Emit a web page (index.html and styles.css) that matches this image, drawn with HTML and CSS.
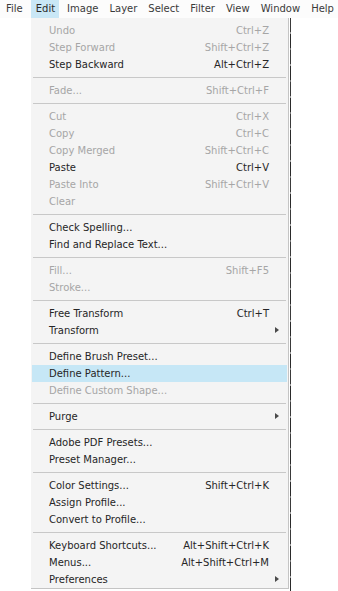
FILE: index.html
```html
<!DOCTYPE html>
<html>
<head>
<meta charset="utf-8">
<link rel="stylesheet" href="styles.css">
</head>
<body>
<div class="menubar">
  <span class="mb-item">File</span>
  <span class="mb-item active">Edit</span>
  <span class="mb-item">Image</span>
  <span class="mb-item">Layer</span>
  <span class="mb-item">Select</span>
  <span class="mb-item">Filter</span>
  <span class="mb-item">View</span>
  <span class="mb-item">Window</span>
  <span class="mb-item">Help</span>
</div>
<div class="stage">
  <div class="menu">
    <div class="row dis"><span class="lbl">Undo</span><span class="key">Ctrl+Z</span></div>
    <div class="row dis"><span class="lbl">Step Forward</span><span class="key">Shift+Ctrl+Z</span></div>
    <div class="row"><span class="lbl">Step Backward</span><span class="key">Alt+Ctrl+Z</span></div>
    <div class="sep"></div>
    <div class="row dis"><span class="lbl">Fade...</span><span class="key">Shift+Ctrl+F</span></div>
    <div class="sep"></div>
    <div class="row dis"><span class="lbl">Cut</span><span class="key">Ctrl+X</span></div>
    <div class="row dis"><span class="lbl">Copy</span><span class="key">Ctrl+C</span></div>
    <div class="row dis"><span class="lbl">Copy Merged</span><span class="key">Shift+Ctrl+C</span></div>
    <div class="row"><span class="lbl">Paste</span><span class="key">Ctrl+V</span></div>
    <div class="row dis"><span class="lbl">Paste Into</span><span class="key">Shift+Ctrl+V</span></div>
    <div class="row dis"><span class="lbl">Clear</span></div>
    <div class="sep"></div>
    <div class="row"><span class="lbl">Check Spelling...</span></div>
    <div class="row"><span class="lbl">Find and Replace Text...</span></div>
    <div class="sep"></div>
    <div class="row dis"><span class="lbl">Fill...</span><span class="key">Shift+F5</span></div>
    <div class="row dis"><span class="lbl">Stroke...</span></div>
    <div class="sep"></div>
    <div class="row"><span class="lbl">Free Transform</span><span class="key">Ctrl+T</span></div>
    <div class="row sub"><span class="lbl">Transform</span></div>
    <div class="sep"></div>
    <div class="row"><span class="lbl">Define Brush Preset...</span></div>
    <div class="row hl"><span class="lbl">Define Pattern...</span></div>
    <div class="row dis"><span class="lbl">Define Custom Shape...</span></div>
    <div class="sep"></div>
    <div class="row sub"><span class="lbl">Purge</span></div>
    <div class="sep"></div>
    <div class="row"><span class="lbl">Adobe PDF Presets...</span></div>
    <div class="row"><span class="lbl">Preset Manager...</span></div>
    <div class="sep"></div>
    <div class="row"><span class="lbl">Color Settings...</span><span class="key">Shift+Ctrl+K</span></div>
    <div class="row"><span class="lbl">Assign Profile...</span></div>
    <div class="row"><span class="lbl">Convert to Profile...</span></div>
    <div class="sep"></div>
    <div class="row"><span class="lbl">Keyboard Shortcuts...</span><span class="key">Alt+Shift+Ctrl+K</span></div>
    <div class="row"><span class="lbl">Menus...</span><span class="key">Alt+Shift+Ctrl+M</span></div>
    <div class="row sub"><span class="lbl">Preferences</span></div>
  </div>
  <div class="docedge"></div>
</div>
</body>
</html>
```
FILE: styles.css
```css
html, body {
  margin: 0;
  padding: 0;
  background: #ffffff;
}
body {
  font-family: "DejaVu Sans", sans-serif;
  font-size: 10px;
  color: #2a2a2a;
  width: 338px;
  height: 591px;
  overflow: hidden;
}
.menubar {
  display: flex;
  gap: 5px;
  height: 18px;
  padding-left: 3px;
  background: #fcfcfc;
}
.mb-item {
  padding: 0 3px;
  line-height: 18px;
  height: 18px;
  color: #3a3a3a;
}
.mb-item.active {
  background: #c9e7f6;
  padding: 0 4px 0 5px;
  color: #2a2a2a;
}
.stage {
  display: flex;
  align-items: flex-start;
  padding-left: 31px;
  height: 573px;
}
.menu {
  box-sizing: border-box;
  width: 258px;
  height: 571px;
  background: #f4f4f4;
  border-right: 1px solid #c4c4c4;
  border-bottom: 1px solid #c4c4c4;
  padding-top: 4px;
  display: flex;
  flex-direction: column;
}
.row {
  flex: none;
  height: 17px;
  line-height: 17px;
  display: flex;
  justify-content: space-between;
  align-items: center;
  padding: 0 18px 0 17px;
  margin: 0 1px;
  color: #262626;
  position: relative;
}
.row.dis {
  color: #a6a6a6;
}
.row.hl {
  background: #c6e7f6;
}
.key {
  text-align: right;
}
.row.sub::after {
  content: "";
  position: absolute;
  right: 8px;
  top: 5px;
  width: 0;
  height: 0;
  border-top: 3.5px solid transparent;
  border-bottom: 3.5px solid transparent;
  border-left: 4px solid #4a4a4a;
}
.sep {
  flex: none;
  height: 1px;
  margin: 4px 2px 4px 2px;
  background: #c8c8c8;
}
.docedge {
  width: 1px;
  margin-left: 1px;
  height: 573px;
  background: repeating-linear-gradient(to bottom, #3a3a3a 0, #3a3a3a 14px, #9a9a9a 14px, #9a9a9a 16px, #2a2a2a 16px, #2a2a2a 30px, #777 30px, #777 32px);
}
```
